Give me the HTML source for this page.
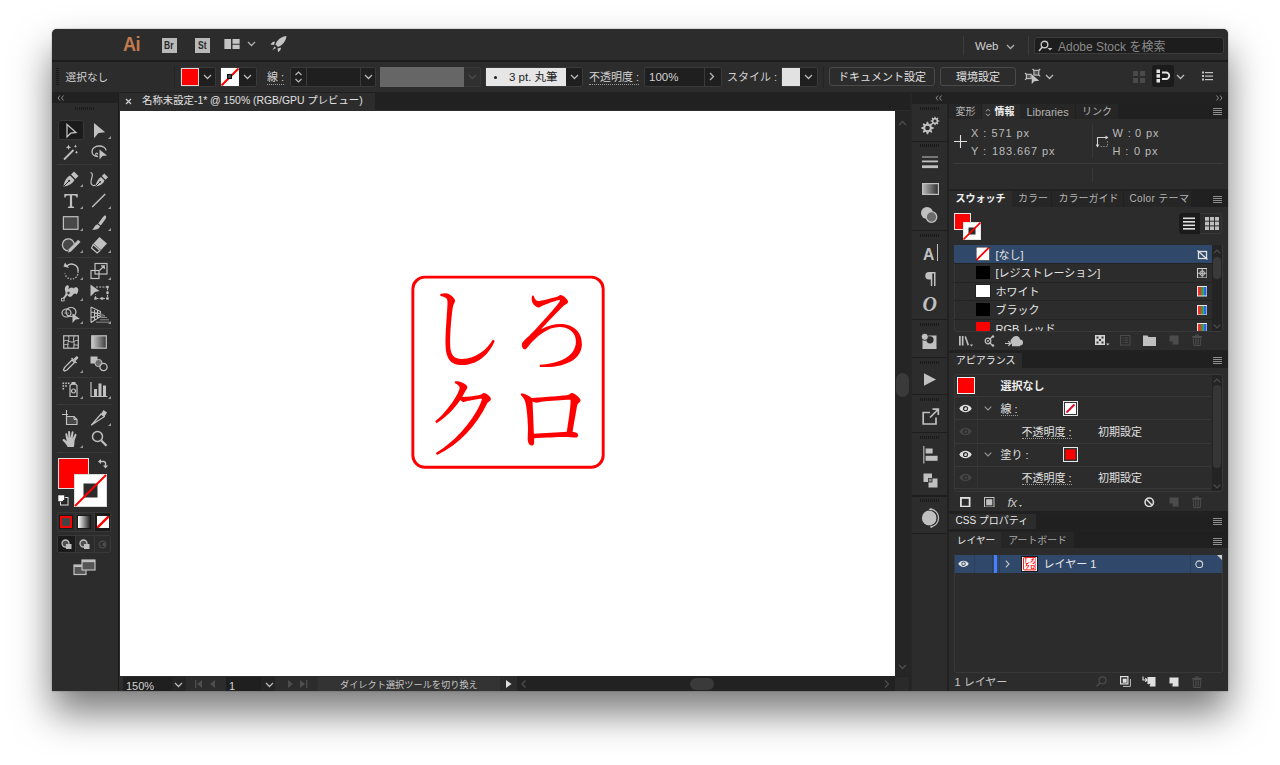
<!DOCTYPE html>
<html lang="ja">
<head>
<meta charset="utf-8">
<title>Illustrator</title>
<style>
html,body{margin:0;padding:0;background:#fff;}
body{width:1280px;height:765px;overflow:hidden;position:relative;font-family:"Liberation Sans","Noto Sans CJK JP",sans-serif;font-size:11px;color:#d2d2d2;}
#win{position:absolute;left:52px;top:29px;width:1176px;height:662px;border-radius:5px 5px 0 0;overflow:hidden;background:#2c2c2c;}
#shadow{position:absolute;left:52px;top:29px;width:1176px;height:662px;border-radius:5px 5px 0 0;box-shadow:0 22px 38px rgba(0,0,0,.52),0 0 2px rgba(0,0,0,.35);}
#pg{position:absolute;left:-52px;top:-29px;width:1280px;height:765px;}
#pg div,#pg span,#pg svg{position:absolute;box-sizing:border-box;}
#pg span{white-space:nowrap;line-height:1;}
.dk{background:#212121;}
.pn{background:#2c2c2c;}
.ln{background:#1c1c1c;}
.fld{background:#1f1f1f;border:1px solid #3a3a3a;border-radius:2px;}
.btn{border:1px solid #4a4a4a;border-radius:3px;}
.t{color:#d2d2d2;}
.b{font-weight:bold;color:#ececec;}
.dim{color:#8c8c8c;}
</style>
</head>
<body>
<div id="shadow"></div>
<div id="win"><div id="pg">

<!-- ===== APP BAR ===== -->
<div class="pn" style="left:52px;top:29px;width:1176px;height:32px;"></div>
<div class="ln" style="left:52px;top:60px;width:1176px;height:2px;"></div>

<span style="left:123px;top:33px;font-size:21px;font-weight:bold;color:#c27a4c;letter-spacing:-0.5px;transform:scaleX(.86);transform-origin:0 0;">Ai</span>
<div style="left:162px;top:37.5px;width:15px;height:15px;background:#b9b9b9;"></div>
<span style="left:164px;top:40.5px;font-size:10px;font-weight:bold;color:#2a2a2a;transform:scaleX(.85);transform-origin:0 0;">Br</span>
<div style="left:195px;top:37.5px;width:15px;height:15px;background:#b9b9b9;"></div>
<span style="left:198px;top:40.5px;font-size:10px;font-weight:bold;color:#2a2a2a;transform:scaleX(.85);transform-origin:0 0;">St</span>
<svg style="left:224px;top:38.7px;" width="16" height="10.5" viewBox="0 0 16 11"><rect x="0" y="0" width="7" height="11" fill="#c4c4c4"/><rect x="8.5" y="0" width="7.5" height="5" fill="#c4c4c4"/><rect x="8.5" y="6" width="7.5" height="5" fill="#c4c4c4"/></svg>
<svg style="left:247px;top:41px;" width="9" height="6" viewBox="0 0 9 6"><path d="M1 1l3.5 3.5L8 1" fill="none" stroke="#b0b0b0" stroke-width="1.3"/></svg>
<svg style="left:269px;top:35px;" width="19" height="18" viewBox="0 0 19 18"><path d="M17.5 1C12 1.5 8 5 6.5 9.5l2.5 2.5C13 10.5 17 6.500 17.5 1z" fill="#c4c4c4"/><path d="M6 6.500C4 6.500 2.500 7.500 1.500 9.500l3.500.5z" fill="#c4c4c4"/><path d="M12 12.500c0 2-1 3.500-3 4.500l-.5-3.500z" fill="#c4c4c4"/><path d="M5.500 11.500l-2 3.500 3.500-2z" fill="#c4c4c4"/></svg>
<div style="left:963px;top:36px;width:1px;height:19px;background:#3c3c3c;"></div>
<div style="left:1028px;top:36px;width:1px;height:19px;background:#3c3c3c;"></div>
<span class="t" style="left:975px;top:40.5px;font-size:11.5px;">Web</span>
<svg style="left:1006px;top:44px;" width="9" height="6" viewBox="0 0 9 6"><path d="M1 1l3.500 3.500L8 1" fill="none" stroke="#b0b0b0" stroke-width="1.300"/></svg>
<div style="left:1034px;top:37px;width:190px;height:17px;background:#1d1d1d;border:1px solid #3b3b3b;border-radius:3px;"></div>
<svg style="left:1038px;top:40px;" width="16" height="13" viewBox="0 0 16 13"><circle cx="6.500" cy="4.500" r="3.300" fill="none" stroke="#c4c4c4" stroke-width="1.400"/><path d="M4.300 7L1 11" stroke="#c4c4c4" stroke-width="1.600" fill="none"/><path d="M9.500 8h5l-2.500 2.500z" fill="#c4c4c4"/></svg>
<span style="left:1058px;top:40.5px;font-size:12px;color:#8a8a8a;">Adobe Stock を検索</span>
<!--APPBAR-->

<!-- ===== CONTROL BAR ===== -->
<div class="pn" style="left:52px;top:62px;width:1176px;height:30px;"></div>
<div class="dk" style="left:52px;top:92px;width:1176px;height:18px;"></div>

<div style="left:56px;top:68px;width:3px;height:18px;background:repeating-linear-gradient(#1a1a1a 0 1px,#2c2c2c 1px 2px);"></div>
<span class="t" style="left:65.5px;top:72px;font-size:10.7px;">選択なし</span>
<div style="left:174px;top:66px;width:1px;height:22px;background:#242424;"></div>
<div class="fld" style="left:180px;top:67px;width:36px;height:20px;"></div>
<div style="left:181px;top:68px;width:18px;height:18px;background:#ff0000;border:1px solid #d8d8d8;"></div>
<svg style="left:203px;top:73.5px;" width="9" height="6" viewBox="0 0 9 6"><path d="M1 1l3.5 3.5L8 1" fill="none" stroke="#b8b8b8" stroke-width="1.3"/></svg>
<div class="fld" style="left:220px;top:67px;width:37px;height:20px;"></div>
<div style="left:221px;top:68px;width:18px;height:18px;background:#fff;"></div>
<svg style="left:221px;top:68px;" width="18" height="18" viewBox="0 0 18 18"><path d="M0.500 17.500L17.500 0.500" stroke="#ff0000" stroke-width="2"/><rect x="6.500" y="6.500" width="4" height="4" fill="#444" stroke="#111" stroke-width="1"/></svg>
<svg style="left:243px;top:73.5px;" width="9" height="6" viewBox="0 0 9 6"><path d="M1 1l3.5 3.5L8 1" fill="none" stroke="#b8b8b8" stroke-width="1.3"/></svg>
<span class="t" style="left:267px;top:72px;font-size:11px;border-bottom:1px dotted #999;padding-bottom:.5px;">線 :</span>
<div class="fld" style="left:290px;top:67px;width:86px;height:20px;"></div>
<div style="left:306px;top:68px;width:1px;height:18px;background:#3a3a3a;"></div>
<div style="left:360px;top:68px;width:1px;height:18px;background:#3a3a3a;"></div>
<svg style="left:294px;top:70px;" width="9" height="14" viewBox="0 0 9 14"><path d="M1.500 5L4.500 2l3 3M1.500 9l3 3 3-3" fill="none" stroke="#b8b8b8" stroke-width="1.200"/></svg>
<svg style="left:364px;top:73.5px;" width="9" height="6" viewBox="0 0 9 6"><path d="M1 1l3.5 3.5L8 1" fill="none" stroke="#b8b8b8" stroke-width="1.3"/></svg>
<div style="left:380px;top:67px;width:84px;height:20px;background:#666;"></div>
<div style="left:464px;top:67px;width:17px;height:20px;background:#303030;border:1px solid #383838;border-left:0;border-radius:0 2px 2px 0;"></div>
<svg style="left:468px;top:73.5px;" width="9" height="6" viewBox="0 0 9 6"><path d="M1 1l3.5 3.5L8 1" fill="none" stroke="#4a4a4a" stroke-width="1.3"/></svg>
<div class="fld" style="left:485px;top:67px;width:98px;height:20px;"></div>
<div style="left:486px;top:68px;width:80px;height:18px;background:#e6e6e6;"></div>
<div style="left:494px;top:76px;width:3px;height:3px;border-radius:2px;background:#222;"></div>
<span style="left:509px;top:72px;font-size:11.500px;color:#222;">3 pt. 丸筆</span>
<svg style="left:570px;top:73.5px;" width="9" height="6" viewBox="0 0 9 6"><path d="M1 1l3.5 3.5L8 1" fill="none" stroke="#b8b8b8" stroke-width="1.3"/></svg>
<span class="t" style="left:589px;top:72px;font-size:11px;border-bottom:1px dotted #999;padding-bottom:.5px;">不透明度 :</span>
<div class="fld" style="left:644px;top:67px;width:78px;height:20px;"></div>
<div style="left:704px;top:68px;width:1px;height:18px;background:#3a3a3a;"></div>
<span class="t" style="left:649px;top:72px;font-size:11.500px;">100%</span>
<svg style="left:709px;top:72px;" width="6" height="9" viewBox="0 0 6 9"><path d="M1 1l3.500 3.500L1 8" fill="none" stroke="#b8b8b8" stroke-width="1.300"/></svg>
<span class="t" style="left:727px;top:72px;font-size:11px;">スタイル :</span>
<div class="fld" style="left:781px;top:67px;width:37px;height:20px;"></div>
<div style="left:782px;top:68px;width:18px;height:18px;background:#e2e2e2;"></div>
<svg style="left:804px;top:73.5px;" width="9" height="6" viewBox="0 0 9 6"><path d="M1 1l3.5 3.5L8 1" fill="none" stroke="#b8b8b8" stroke-width="1.3"/></svg>
<div style="left:823px;top:66px;width:1px;height:22px;background:#242424;"></div>
<div class="btn" style="left:829px;top:67px;width:106px;height:19px;"></div>
<span class="t" style="left:838px;top:72px;font-size:11px;color:#e0e0e0;">ドキュメント設定</span>
<div class="btn" style="left:940px;top:67px;width:76px;height:19px;"></div>
<span class="t" style="left:956px;top:72px;font-size:11px;color:#e0e0e0;">環境設定</span>
<svg style="left:1024px;top:68px;" width="18" height="17" viewBox="0 0 18 17"><g fill="none" stroke="#c4c4c4" stroke-width="1.100"><rect x="2.400" y="6.300" width="4.800" height="4.300" fill="#555"/><path d="M2.400 6.300L1 5M2.400 10.600L1 11.900"/><rect x="9.900" y="2.300" width="4.900" height="4.800" fill="#555"/><path d="M9.900 2.300L8.500 1M14.800 2.300L16.200 1M14.800 7.100L16.200 8.400"/></g><path d="M7.700 6.300V16.300L10.300 13.300L15.200 12.700Z" fill="#c4c4c4"/></svg>
<svg style="left:1045px;top:73.5px;" width="9" height="6" viewBox="0 0 9 6"><path d="M1 1l3.5 3.5L8 1" fill="none" stroke="#b8b8b8" stroke-width="1.3"/></svg>
<svg style="left:1132px;top:70px;" width="14" height="14" viewBox="0 0 14 14"><g fill="#4a4a4a"><rect x="1" y="1" width="5" height="5"/><rect x="8" y="1" width="5" height="5"/><rect x="1" y="8" width="5" height="5"/><rect x="8" y="8" width="5" height="5"/></g></svg>
<div style="left:1152px;top:65px;width:22px;height:22px;background:#1b1b1b;border-radius:3px;"></div>
<svg style="left:1155px;top:68px;" width="16" height="16" viewBox="0 0 16 16"><g fill="#e4e4e4"><rect x="1.500" y="1.500" width="3.500" height="3.500"/><rect x="1.500" y="6.200" width="3.500" height="3.500"/><rect x="1.500" y="11" width="3.500" height="3.500"/></g><path d="M7 4.500h4a3.200 3.200 0 0 1 0 6.500H7" fill="none" stroke="#e4e4e4" stroke-width="1.800"/></svg>
<svg style="left:1176px;top:73.5px;" width="9" height="6" viewBox="0 0 9 6"><path d="M1 1l3.5 3.5L8 1" fill="none" stroke="#b8b8b8" stroke-width="1.3"/></svg>
<svg style="left:1202px;top:71px;" width="11" height="10" viewBox="0 0 11 10"><g fill="#c4c4c4"><rect x="0" y="0.500" width="2" height="2"/><rect x="3" y="1" width="8" height="1.200"/><rect x="0" y="4" width="2" height="2"/><rect x="3" y="4.500" width="8" height="1.200"/><rect x="0" y="7.500" width="2" height="2"/><rect x="3" y="8" width="8" height="1.200"/></g></svg>
<!--CTRL-->

<!-- ===== TOOLS ===== -->
<div class="pn" style="left:52px;top:102px;width:67px;height:589px;"></div>
<!--TOOLS_BEGIN-->
<div class="dk" style="left:52px;top:92px;width:67px;height:11px;"></div>
<svg style="left:57px;top:95px;" width="8" height="6" viewBox="0 0 8 6"><path d="M3 0.500L1 3l2 2.500M6.500 0.500L4.500 3l2 2.500" fill="none" stroke="#8a8a8a" stroke-width="1"/></svg>
<div style="left:75px;top:107px;width:19px;height:3px;background:repeating-linear-gradient(90deg,#1a1a1a 0 1px,#2c2c2c 1px 2px);"></div>
<div style="left:118px;top:93px;width:1px;height:598px;background:#1c1c1c;"></div>
<div style="left:58px;top:120px;width:26px;height:20px;background:#1b1b1b;border:1px solid #383838;border-radius:3px;"></div>
<div style="left:57px;top:164px;width:55px;height:1px;background:#383838;"></div>
<div style="left:57px;top:257px;width:55px;height:1px;background:#383838;"></div>
<div style="left:57px;top:328px;width:55px;height:1px;background:#383838;"></div>
<div style="left:57px;top:377px;width:55px;height:1px;background:#383838;"></div>
<div style="left:57px;top:404px;width:55px;height:1px;background:#383838;"></div>
<div style="left:57px;top:452px;width:55px;height:1px;background:#383838;"></div>
<svg style="left:58.8px;top:118.5px;overflow:visible;" width="24" height="24" viewBox="-12 -12 24 24"><path d="M-4 -6.600L5 1.500L-0.300 2.200L-4 6Z" fill="none" stroke="#c0c0c0" stroke-width="1.300" stroke-linejoin="miter"/></svg>
<svg style="left:86.8px;top:118.5px;overflow:visible;" width="24" height="24" viewBox="-12 -12 24 24"><path d="M-5 -8L6.200 1.200L-0.500 2L-5 7.200Z" fill="#c0c0c0"/></svg>
<svg style="left:108.3px;top:135.8px;" width="3" height="3" viewBox="0 0 3 3"><path d="M3 0V3H0Z" fill="#9a9a9a"/></svg>
<svg style="left:58.8px;top:140.7px;overflow:visible;" width="24" height="24" viewBox="-12 -12 24 24"><path d="M-7 6.500L2.500 -3" stroke="#c0c0c0" stroke-width="1.800" fill="none"/><path d="M-2.500 -8.500l.8 2 2 .8-2 .8-.8 2-.8-2-2-.8 2-.8zM4.500 -8.500l.5 1.300 1.300.5-1.300.5-.5 1.300-.5-1.300-1.300-.5 1.300-.5zM5.500 -2.500l.5 1.200 1.200.5-1.200.5-.5 1.200-.5-1.200-1.200-.5 1.200-.5z" fill="#c0c0c0"/></svg>
<svg style="left:86.8px;top:140.7px;overflow:visible;" width="24" height="24" viewBox="-12 -12 24 24"><path d="M-1 3.500C-5 3.500 -7 1 -7 -1.500C-7 -5 -3.500 -7 0 -7C4 -7 7 -5 7 -2.500" fill="none" stroke="#c0c0c0" stroke-width="1.300"/><path d="M-1.500 3.500c-1.500 -.5 -2.500 -2 -1.500 -3c1 -.8 2 0 1.500 1" fill="none" stroke="#c0c0c0" stroke-width="1.100"/><path d="M0.500 -3.500L8 2.500L3.500 3L0.500 6.500Z" fill="#c0c0c0"/></svg>
<svg style="left:58.8px;top:166.8px;overflow:visible;" width="24" height="24" viewBox="-12 -12 24 24"><path d="M-7.500 7.500C-7 2 -4 -2 -1 -3.500L3.500 1C2 4 -2 7 -7.500 7.500Z" fill="#c0c0c0"/><path d="M0 -4.500L3 -7.500L7.500 -3L4.500 0Z" fill="#c0c0c0"/><path d="M-7 7L-2 2" stroke="#2c2c2c" stroke-width="1"/><circle cx="-1.800" cy="1.800" r="1" fill="#2c2c2c"/></svg>
<svg style="left:80.3px;top:184.1px;" width="3" height="3" viewBox="0 0 3 3"><path d="M3 0V3H0Z" fill="#9a9a9a"/></svg>
<svg style="left:86.8px;top:166.8px;overflow:visible;" width="24" height="24" viewBox="-12 -12 24 24"><path d="M-3.500 7.500C-3 3 -0.500 -0.500 2 -2L5.500 1.500C4.500 4.500 1 7 -3.500 7.500Z" fill="#c0c0c0"/><path d="M2.800 -3L5.300 -5.500L9 -1.800L6.500 0.700Z" fill="#c0c0c0"/><path d="M-3 7L1 3" stroke="#2c2c2c" stroke-width="1"/><circle cx="1.200" cy="2.800" r=".9" fill="#2c2c2c"/><path d="M-8.500 -6.500C-5 -6 -7.500 -1 -8 2.500C-8.500 6 -5.500 7.500 -3.500 6" fill="none" stroke="#c0c0c0" stroke-width="1.200"/></svg>
<svg style="left:58.8px;top:188.8px;overflow:visible;" width="24" height="24" viewBox="-12 -12 24 24"><path d="M-6.700 -7h13.400v3.600h-1.300c-.2-1.500-.7-2-2.200-2H1.100v9.800c0 1 .5 1.300 2 1.400v1.300h-6.200v-1.300c1.500-.1 2-.4 2-1.400V-5.400h-2.100c-1.500 0-2 .5-2.200 2h-1.300z" fill="#c0c0c0"/></svg>
<svg style="left:80.3px;top:206.1px;" width="3" height="3" viewBox="0 0 3 3"><path d="M3 0V3H0Z" fill="#9a9a9a"/></svg>
<svg style="left:86.8px;top:188.8px;overflow:visible;" width="24" height="24" viewBox="-12 -12 24 24"><path d="M-6.800 6L6.200 -7" stroke="#c0c0c0" stroke-width="1.400" fill="none"/></svg>
<svg style="left:108.3px;top:206.1px;" width="3" height="3" viewBox="0 0 3 3"><path d="M3 0V3H0Z" fill="#9a9a9a"/></svg>
<svg style="left:58.8px;top:210.5px;overflow:visible;" width="24" height="24" viewBox="-12 -12 24 24"><rect x="-7.600" y="-6.300" width="14.600" height="12.600" fill="#484848" stroke="#c0c0c0" stroke-width="1.200"/></svg>
<svg style="left:80.3px;top:227.8px;" width="3" height="3" viewBox="0 0 3 3"><path d="M3 0V3H0Z" fill="#9a9a9a"/></svg>
<svg style="left:86.8px;top:210.5px;overflow:visible;" width="24" height="24" viewBox="-12 -12 24 24"><path d="M6.300 -7.500C7.500 -7 7.300 -5.500 6.500 -4L1.800 2.500L-0.800 0.500L4 -6C5 -7.300 5.600 -7.800 6.300 -7.500Z" fill="#c0c0c0"/><path d="M-1.500 1.300L1 3.300C0.500 5.500 -1.500 7 -7 6.800C-5 5.500 -4.500 2 -1.500 1.300Z" fill="#c0c0c0"/></svg>
<svg style="left:108.3px;top:227.8px;" width="3" height="3" viewBox="0 0 3 3"><path d="M3 0V3H0Z" fill="#9a9a9a"/></svg>
<svg style="left:58.8px;top:232.7px;overflow:visible;" width="24" height="24" viewBox="-12 -12 24 24"><path d="M-3 5.800A6 6 0 1 1 3.300 -1" fill="#484848" stroke="#c0c0c0" stroke-width="1.300"/><path d="M-2.800 7.800L-2.300 4.200L7.200 -5.300L9.500 -3L0 6.500Z" fill="#c0c0c0"/></svg>
<svg style="left:80.3px;top:250.0px;" width="3" height="3" viewBox="0 0 3 3"><path d="M3 0V3H0Z" fill="#9a9a9a"/></svg>
<svg style="left:86.8px;top:232.7px;overflow:visible;" width="24" height="24" viewBox="-12 -12 24 24"><path d="M0.500 -8L8 -1.500L2 5L-5.500 -1.500Z" fill="#c0c0c0"/><path d="M-5.800 -0.500L1 5.500L-1.800 8L-7.500 3Z" fill="none" stroke="#c0c0c0" stroke-width="1.200"/></svg>
<svg style="left:108.3px;top:250.0px;" width="3" height="3" viewBox="0 0 3 3"><path d="M3 0V3H0Z" fill="#9a9a9a"/></svg>
<svg style="left:58.8px;top:259.4px;overflow:visible;" width="24" height="24" viewBox="-12 -12 24 24"><path d="M-4.500 -4.500A6.500 6.500 0 0 1 7 0.500" fill="none" stroke="#c0c0c0" stroke-width="1.500"/><path d="M-7.500 -4.500L-2 -3L-6 -8.500Z" fill="#c0c0c0"/><path d="M7 0.500A6.500 6.500 0 0 1 -6 2.500" fill="none" stroke="#c0c0c0" stroke-width="1.300" stroke-dasharray="1.300 1.500"/></svg>
<svg style="left:80.3px;top:276.7px;" width="3" height="3" viewBox="0 0 3 3"><path d="M3 0V3H0Z" fill="#9a9a9a"/></svg>
<svg style="left:86.8px;top:259.4px;overflow:visible;" width="24" height="24" viewBox="-12 -12 24 24"><rect x="-8" y="-0.500" width="8" height="8" fill="none" stroke="#c0c0c0" stroke-width="1.200"/><rect x="-4" y="-7.500" width="12" height="10.500" fill="none" stroke="#c0c0c0" stroke-width="1.200"/><path d="M0.500 -0.500L5 -5M2 -5.200h3.300v3.300" fill="none" stroke="#c0c0c0" stroke-width="1.200"/></svg>
<svg style="left:108.3px;top:276.7px;" width="3" height="3" viewBox="0 0 3 3"><path d="M3 0V3H0Z" fill="#9a9a9a"/></svg>
<svg style="left:58.8px;top:281.0px;overflow:visible;" width="24" height="24" viewBox="-12 -12 24 24"><path d="M-4.500 -7.500C-2 -8.500 -1.500 -5.500 -3 -3.500C-1 -5.500 1.500 -6.500 2.500 -4.500C3.500 -6 6 -6.500 7 -4.500C8 -2.500 6.500 0 5.500 1.500C4.500 -0.500 2.500 0.500 1.500 2.500C0 4.500 -3 4 -3.500 2C-4.500 3.500 -6 5 -7 6L-8.200 4.800C-6.500 3 -5 1 -5.500 -1C-6.500 -3 -6.500 -6 -4.500 -7.500Z" fill="#c0c0c0"/><circle cx="-2.500" cy="0" r="1.700" fill="#2c2c2c" stroke="#c0c0c0" stroke-width=".9"/><rect x="-9.500" y="5.300" width="2.600" height="2.600" fill="#2c2c2c" stroke="#c0c0c0" stroke-width=".9"/></svg>
<svg style="left:80.3px;top:298.3px;" width="3" height="3" viewBox="0 0 3 3"><path d="M3 0V3H0Z" fill="#9a9a9a"/></svg>
<svg style="left:86.8px;top:281.0px;overflow:visible;" width="24" height="24" viewBox="-12 -12 24 24"><path d="M-8.500 -8.500L0.500 -2L-4 -1L-8.500 3.500Z" fill="#c0c0c0"/><path d="M-3 -6H8.500V5.500H-3.500V1.500" fill="none" stroke="#c0c0c0" stroke-width="1.100" stroke-dasharray="2 1.200"/><g fill="#c0c0c0"><rect x="7.300" y="-7.200" width="2.400" height="2.400"/><rect x="7.300" y="4.300" width="2.400" height="2.400"/><rect x="-4.700" y="4.300" width="2.400" height="2.400"/><rect x="1.800" y="4.300" width="2.400" height="2.400"/><rect x="7.300" y="-1.500" width="2.400" height="2.400"/></g></svg>
<svg style="left:58.8px;top:303.3px;overflow:visible;" width="24" height="24" viewBox="-12 -12 24 24"><ellipse cx="-4.500" cy="-2" rx="4.500" ry="4" fill="none" stroke="#c0c0c0" stroke-width="1.200"/><ellipse cx="0" cy="-3" rx="5" ry="4.500" fill="none" stroke="#c0c0c0" stroke-width="1.200"/><path d="M-6.500 -2h4.500" stroke="#c0c0c0" stroke-width="1.200" stroke-dasharray="1 1"/><path d="M1.500 -1.500L9 4L4.500 4.500L1.500 8Z" fill="#c0c0c0"/></svg>
<svg style="left:80.3px;top:320.6px;" width="3" height="3" viewBox="0 0 3 3"><path d="M3 0V3H0Z" fill="#9a9a9a"/></svg>
<svg style="left:86.8px;top:303.3px;overflow:visible;" width="24" height="24" viewBox="-12 -12 24 24"><path d="M-8 -8V7.500M-8 -8L1.500 -3.500V1.500L-8 7.500M-8 -3L1.500 -1.500M-8 2.500L1.500 0M-4.500 -6.300V5.300M-1.500 -5V3.500" fill="none" stroke="#c0c0c0" stroke-width="1.100"/><path d="M1.500 -1.500L6 1H1.500ZM1.500 2.500H8M1 4.800H10M-3 7.200H11" fill="none" stroke="#8a8a8a" stroke-width="1"/></svg>
<svg style="left:108.3px;top:320.6px;" width="3" height="3" viewBox="0 0 3 3"><path d="M3 0V3H0Z" fill="#9a9a9a"/></svg>
<svg style="left:58.8px;top:330.0px;overflow:visible;" width="24" height="24" viewBox="-12 -12 24 24"><rect x="-7.300" y="-6.200" width="14.600" height="12.400" fill="none" stroke="#c0c0c0" stroke-width="1.200"/><path d="M-7 -1C-3 -3 -1 1 2 0C4 -1 5 -2 7 -1.500M-2.500 -6C-1 -3 -4 0 -3 6M3 -6C1.500 -2 4.500 2 2.500 6M-7 3C-5 2 -4 3 -2.500 2.500M2.500 3C4 2.500 5.500 3.500 7 3" fill="none" stroke="#c0c0c0" stroke-width="1"/></svg>
<svg style="left:86.8px;top:330.0px;overflow:visible;" width="24" height="24" viewBox="-12 -12 24 24"><defs><linearGradient id="tg1" x1="0" x2="1" y1="0" y2="0"><stop offset="0" stop-color="#d0d0d0"/><stop offset="1" stop-color="#3a3a3a"/></linearGradient></defs><rect x="-7.300" y="-6.200" width="14.600" height="12.400" fill="url(#tg1)" stroke="#c0c0c0" stroke-width="1.200"/></svg>
<svg style="left:58.8px;top:352.2px;overflow:visible;" width="24" height="24" viewBox="-12 -12 24 24"><path d="M-7.500 6L-6.500 3.500L1 -4L3.500 -1.500L-4 6L-6.500 7Z" fill="none" stroke="#c0c0c0" stroke-width="1.300"/><path d="M0 -5.500L5 -0.500L6 -1.500L1 -6.500Z" fill="#c0c0c0"/><path d="M2.500 -5L5 -7.500C6 -8.500 8 -7 7 -5.500L4.500 -3Z" fill="#c0c0c0"/></svg>
<svg style="left:80.3px;top:369.5px;" width="3" height="3" viewBox="0 0 3 3"><path d="M3 0V3H0Z" fill="#9a9a9a"/></svg>
<svg style="left:86.8px;top:352.2px;overflow:visible;" width="24" height="24" viewBox="-12 -12 24 24"><rect x="-8.500" y="-7.500" width="7" height="7" fill="#c0c0c0"/><circle cx="-0.500" cy="-1" r="3.600" fill="#6a6a6a" stroke="#c0c0c0" stroke-width="1"/><circle cx="4.500" cy="3" r="3.600" fill="#2c2c2c" stroke="#c0c0c0" stroke-width="1.300"/></svg>
<svg style="left:58.8px;top:378.3px;overflow:visible;" width="24" height="24" viewBox="-12 -12 24 24"><g fill="#c0c0c0"><rect x="-8.500" y="-7.500" width="1.600" height="1.600"/><rect x="-5.800" y="-7.500" width="1.600" height="1.600"/><rect x="-3.100" y="-7.500" width="1.600" height="1.600"/><rect x="-8.500" y="-4.800" width="1.600" height="1.600"/><rect x="-5.800" y="-4.800" width="1.600" height="1.600"/><rect x="-8.500" y="-2.100" width="1.600" height="1.600"/><rect x="0.500" y="-8" width="4" height="2.500"/></g><path d="M-1 -4.500L0.500 -5.800H4.500L6 -4.500V6.500H-1Z" fill="none" stroke="#c0c0c0" stroke-width="1.200"/><circle cx="2.500" cy="1" r="2" fill="none" stroke="#c0c0c0" stroke-width="1.200"/></svg>
<svg style="left:80.3px;top:395.6px;" width="3" height="3" viewBox="0 0 3 3"><path d="M3 0V3H0Z" fill="#9a9a9a"/></svg>
<svg style="left:86.8px;top:378.3px;overflow:visible;" width="24" height="24" viewBox="-12 -12 24 24"><path d="M-8 -8V6.500H8.500" fill="none" stroke="#c0c0c0" stroke-width="1.200"/><rect x="-5" y="-1" width="3" height="7" fill="#c0c0c0"/><rect x="-0.500" y="-6.500" width="3" height="12.500" fill="#c0c0c0"/><rect x="4" y="-4.500" width="3" height="10.500" fill="#c0c0c0"/></svg>
<svg style="left:108.3px;top:395.6px;" width="3" height="3" viewBox="0 0 3 3"><path d="M3 0V3H0Z" fill="#9a9a9a"/></svg>
<svg style="left:58.8px;top:405.8px;overflow:visible;" width="24" height="24" viewBox="-12 -12 24 24"><path d="M-9 -3.500H-3M-4.500 -8V-2" stroke="#c0c0c0" stroke-width="1.100" fill="none"/><path d="M-4.500 -1.500H3L6 1.500V6.500H-4.500Z" fill="#484848" stroke="#c0c0c0" stroke-width="1.200"/><path d="M3 -1.500V1.500H6" fill="none" stroke="#c0c0c0" stroke-width="1"/></svg>
<svg style="left:86.8px;top:405.8px;overflow:visible;" width="24" height="24" viewBox="-12 -12 24 24"><path d="M-7.500 7L2 -4L5.500 -1.500Z" fill="none" stroke="#c0c0c0" stroke-width="1.200" stroke-linejoin="round"/><path d="M2 -4L4.500 -8L8 -5.500L5.500 -1.500Z" fill="#c0c0c0"/></svg>
<svg style="left:108.3px;top:423.1px;" width="3" height="3" viewBox="0 0 3 3"><path d="M3 0V3H0Z" fill="#9a9a9a"/></svg>
<svg style="left:58.8px;top:427.2px;overflow:visible;" width="24" height="24" viewBox="-12 -12 24 24"><path d="M-3.300 8C-4.500 5.500 -6 3.800 -8.200 1.800C-9 0.800 -7.700 -0.500 -6.500 0.300L-4.300 2.300L-5.600 -4.300C-5.900 -5.800 -4 -6.200 -3.700 -4.800L-2.700 -0.500L-2.900 -7C-2.900 -8.500 -1 -8.500 -0.900 -7L-0.600 -0.800L0.600 -6.800C0.900 -8.200 2.700 -7.900 2.500 -6.400L1.600 -0.300L3.600 -4.600C4.200 -5.900 5.900 -5.200 5.400 -3.800L3.600 1.500C3.300 4 3.500 6 2.800 8Z" fill="#c0c0c0"/></svg>
<svg style="left:80.3px;top:444.5px;" width="3" height="3" viewBox="0 0 3 3"><path d="M3 0V3H0Z" fill="#9a9a9a"/></svg>
<svg style="left:86.8px;top:427.2px;overflow:visible;" width="24" height="24" viewBox="-12 -12 24 24"><circle cx="-1.500" cy="-2.500" r="5" fill="none" stroke="#c0c0c0" stroke-width="1.500"/><path d="M2.300 1.500L7.500 6.800" stroke="#c0c0c0" stroke-width="2.200" fill="none"/></svg>
<div style="left:58px;top:458px;width:31px;height:31px;background:#ff0000;border:1px solid #e0e0e0;"></div>
<svg style="left:74px;top:474px;" width="33" height="33" viewBox="0 0 33 33"><rect x="0" y="0" width="33" height="33" fill="#dcdcdc"/><rect x="1" y="1" width="31" height="31" fill="#fff"/><rect x="9.500" y="9.500" width="14" height="14" fill="#2c2c2c"/><path d="M1 32L32 1" stroke="#ff0000" stroke-width="2"/></svg>
<svg style="left:97px;top:458px;" width="12" height="12" viewBox="0 0 12 12"><path d="M3.500 3.500H6.500A2 2 0 0 1 8.500 5.500V8" fill="none" stroke="#c0c0c0" stroke-width="1.400"/><path d="M4 1v5L1 3.500zM6 7.500h5L8.500 10.500z" fill="#c0c0c0"/></svg>
<svg style="left:57px;top:494px;" width="12" height="12" viewBox="0 0 12 12"><rect x="3.500" y="3.500" width="7.500" height="7.500" fill="#222" stroke="#ddd" stroke-width="1"/><rect x="1" y="1" width="6.500" height="6.500" fill="#fff" stroke="#222" stroke-width=".6"/><rect x="6" y="6" width="2.500" height="2.500" fill="#2c2c2c"/></svg>
<div style="left:57px;top:512px;width:54px;height:20px;border:1px solid #393939;border-radius:2px;"></div>
<div style="left:75px;top:513px;width:1px;height:18px;background:#393939;"></div>
<div style="left:94px;top:513px;width:1px;height:18px;background:#393939;"></div>
<div style="left:95px;top:513px;width:15px;height:18px;background:#1b1b1b;"></div>
<div style="left:60px;top:516px;width:12px;height:12px;background:#444;border:2px solid #ff0000;outline:1px solid #1a1a1a;"></div>
<div style="left:78px;top:516px;width:12px;height:12px;background:linear-gradient(90deg,#fff,#222);outline:1px solid #1a1a1a;"></div>
<svg style="left:97px;top:516px;" width="12" height="12" viewBox="0 0 12 12"><rect width="12" height="12" fill="#fff"/><path d="M0 12L12 0" stroke="#ff0000" stroke-width="2.400"/></svg>
<div style="left:57px;top:535px;width:54px;height:18px;border:1px solid #393939;border-radius:2px;"></div>
<div style="left:58px;top:536px;width:17px;height:16px;background:#1b1b1b;"></div>
<div style="left:75px;top:536px;width:1px;height:16px;background:#393939;"></div>
<div style="left:94px;top:536px;width:1px;height:16px;background:#393939;"></div>
<svg style="left:61px;top:539px;" width="12" height="11" viewBox="0 0 12 11"><circle cx="4.500" cy="4.500" r="3.500" fill="#505050" stroke="#c0c0c0" stroke-width="1.300"/><rect x="5" y="5" width="5.500" height="5" fill="#c0c0c0"/></svg>
<svg style="left:79px;top:539px;" width="12" height="11" viewBox="0 0 12 11"><circle cx="4.500" cy="4.500" r="3.500" fill="#505050" stroke="#c0c0c0" stroke-width="1.300"/><rect x="5" y="5" width="5.500" height="5" fill="#c0c0c0"/></svg>
<svg style="left:98px;top:540px;" width="9" height="9" viewBox="0 0 9 9"><circle cx="4.500" cy="4.500" r="3.300" fill="none" stroke="#4c4c4c" stroke-width="1.200"/><rect x="4.500" y="3" width="3" height="3" fill="#4c4c4c"/></svg>
<svg style="left:73px;top:559px;" width="24" height="17" viewBox="0 0 24 17"><rect x="1" y="6" width="12" height="9.500" fill="#555" stroke="#c0c0c0" stroke-width="1.200"/><rect x="1" y="6" width="12" height="2" fill="#c0c0c0"/><rect x="9" y="1" width="13" height="10" fill="#555" stroke="#c0c0c0" stroke-width="1.200"/><rect x="9" y="1" width="13" height="2.200" fill="#c0c0c0"/></svg>
<!--TOOLS_END-->
<!--TOOLS-->

<!-- ===== DOCUMENT ===== -->
<div style="left:119px;top:93px;width:256px;height:17px;background:#2c2c2c;"></div>
<div style="left:120px;top:111px;width:775px;height:565px;background:#fff;"></div>

<svg style="left:125px;top:98px;" width="7" height="7" viewBox="0 0 7 7"><path d="M1 1l5 5M6 1l-5 5" stroke="#d0d0d0" stroke-width="1.200" fill="none"/></svg>
<span style="left:142px;top:96.3px;font-size:10.4px;color:#e2e2e2;">名称未設定-1* @ 150% (RGB/GPU プレビュー)</span>
<!-- stamp -->
<svg style="left:400px;top:265px;" width="220" height="215" viewBox="400 265 220 215"><rect x="412.850" y="277.100" width="190.350" height="190.200" rx="12" ry="12" fill="none" stroke="#ff0000" stroke-width="2.900"/>
<g font-family="'Liberation Serif','Noto Serif CJK SC',serif" font-size="82" fill="#ff0000">
<text transform="translate(422.730 361.220) scale(0.993 1.095)">し</text>
<text transform="translate(509.840 363.090) scale(1.038 1.102)">ろ</text>
<text transform="translate(423.430 450.100) scale(0.981 1.076)">ク</text>
<text transform="translate(505.680 450.230) scale(1.112 1.107)">ロ</text>
</g></svg>
<!-- vertical scrollbar -->
<div style="left:895px;top:111px;width:15px;height:565px;background:#252525;"></div>
<svg style="left:898px;top:120px;" width="9" height="6" viewBox="0 0 9 6"><path d="M1 5l3.500-3.500L8 5" fill="none" stroke="#4e4e4e" stroke-width="1.300"/></svg>
<svg style="left:898px;top:664px;" width="9" height="6" viewBox="0 0 9 6"><path d="M1 1l3.500 3.500L8 1" fill="none" stroke="#4e4e4e" stroke-width="1.300"/></svg>
<div style="left:896px;top:373px;width:13px;height:24px;border-radius:6.500px;background:#3a3a3a;"></div>
<!-- status bar -->
<div style="left:119px;top:676px;width:791px;height:15px;background:#222;"></div>
<div style="left:119px;top:676px;width:398px;height:15px;background:#2c2c2c;"></div>
<div style="left:123px;top:677px;width:49px;height:14px;background:#1f1f1f;"></div>
<div style="left:172px;top:677px;width:14px;height:14px;background:#242424;"></div>
<span class="t" style="left:126px;top:680.5px;font-size:11px;">150%</span>
<svg style="left:174px;top:682px;" width="9" height="6" viewBox="0 0 9 6"><path d="M1 1l3.5 3.5L8 1" fill="none" stroke="#b8b8b8" stroke-width="1.3"/></svg>
<svg style="left:195px;top:680px;" width="22" height="8" viewBox="0 0 22 8"><g fill="#4e4e4e"><rect x="0" y="0" width="1.300" height="8"/><path d="M7 0v8L2 4zM20 0v8l-5-4z"/></g></svg>
<div style="left:226px;top:677px;width:35px;height:14px;background:#1f1f1f;"></div>
<div style="left:261px;top:677px;width:14px;height:14px;background:#242424;"></div>
<span class="t" style="left:229px;top:680.5px;font-size:11px;">1</span>
<svg style="left:265px;top:682px;" width="9" height="6" viewBox="0 0 9 6"><path d="M1 1l3.5 3.5L8 1" fill="none" stroke="#b8b8b8" stroke-width="1.3"/></svg>
<svg style="left:287px;top:680px;" width="22" height="8" viewBox="0 0 22 8"><g fill="#4e4e4e"><path d="M1 0v8l5-4zM13 0v8l5-4z"/><rect x="19" y="0" width="1.300" height="8"/></g></svg>
<div style="left:318px;top:677px;width:182px;height:14px;background:#333;"></div>
<span class="t" style="left:340px;top:681px;font-size:9.2px;color:#c8c8c8;">ダイレクト選択ツールを切り換え</span>
<svg style="left:505px;top:680px;" width="7" height="8" viewBox="0 0 7 8"><path d="M1 0v8l5.500-4z" fill="#e0e0e0"/></svg>
<svg style="left:521px;top:680px;" width="6" height="8" viewBox="0 0 6 8"><path d="M4.500 0.500L1 4l3.500 3.500" fill="none" stroke="#4e4e4e" stroke-width="1.200"/></svg>
<svg style="left:884px;top:680px;" width="6" height="8" viewBox="0 0 6 8"><path d="M1 0.500L4.500 4 1 7.500" fill="none" stroke="#4e4e4e" stroke-width="1.200"/></svg>
<div style="left:690px;top:678px;width:24px;height:12px;border-radius:6px;background:#3a3a3a;"></div>
<div style="left:895px;top:677px;width:14px;height:14px;background:#2a2a2a;"></div>
<!--DOC-->

<!-- ===== DOCK ===== -->
<div class="dk" style="left:910px;top:93px;width:318px;height:598px;"></div>
<!--DOCK_BEGIN-->
<div style="left:910px;top:93px;width:2px;height:598px;background:#262626;"></div>
<div class="dk" style="left:912px;top:93px;width:316px;height:11px;"></div>
<svg style="left:934.5px;top:95px;" width="8" height="6" viewBox="0 0 8 6"><path d="M3 0.500L1 3l2 2.500M6.500 0.500L4.500 3l2 2.500" fill="none" stroke="#8a8a8a" stroke-width="1"/></svg>
<svg style="left:1214.5px;top:95px;" width="8" height="6" viewBox="0 0 8 6"><path d="M1.500 0.500L3.500 3l-2 2.500M5 0.500L7 3 5 5.500" fill="none" stroke="#8a8a8a" stroke-width="1"/></svg>
<div class="pn" style="left:912px;top:104px;width:35px;height:587px;"></div>
<div style="left:912px;top:140.5px;width:35px;height:1.5px;background:#1e1e1e;"></div>
<div style="left:912px;top:229.5px;width:35px;height:1.5px;background:#1e1e1e;"></div>
<div style="left:912px;top:318.8px;width:35px;height:1.5px;background:#1e1e1e;"></div>
<div style="left:912px;top:356.5px;width:35px;height:1.5px;background:#1e1e1e;"></div>
<div style="left:912px;top:393.5px;width:35px;height:1.5px;background:#1e1e1e;"></div>
<div style="left:912px;top:431.5px;width:35px;height:1.5px;background:#1e1e1e;"></div>
<div style="left:912px;top:495px;width:35px;height:1.5px;background:#1e1e1e;"></div>
<div style="left:912px;top:532.5px;width:35px;height:1.5px;background:#1e1e1e;"></div>
<div style="left:920px;top:107px;width:19px;height:3px;background:repeating-linear-gradient(90deg,#191919 0 1px,#2c2c2c 1px 2px);"></div>
<div style="left:920px;top:144px;width:19px;height:3px;background:repeating-linear-gradient(90deg,#191919 0 1px,#2c2c2c 1px 2px);"></div>
<div style="left:920px;top:234px;width:19px;height:3px;background:repeating-linear-gradient(90deg,#191919 0 1px,#2c2c2c 1px 2px);"></div>
<div style="left:920px;top:323px;width:19px;height:3px;background:repeating-linear-gradient(90deg,#191919 0 1px,#2c2c2c 1px 2px);"></div>
<div style="left:920px;top:361px;width:19px;height:3px;background:repeating-linear-gradient(90deg,#191919 0 1px,#2c2c2c 1px 2px);"></div>
<div style="left:920px;top:398px;width:19px;height:3px;background:repeating-linear-gradient(90deg,#191919 0 1px,#2c2c2c 1px 2px);"></div>
<div style="left:920px;top:436px;width:19px;height:3px;background:repeating-linear-gradient(90deg,#191919 0 1px,#2c2c2c 1px 2px);"></div>
<div style="left:920px;top:499px;width:19px;height:3px;background:repeating-linear-gradient(90deg,#191919 0 1px,#2c2c2c 1px 2px);"></div>
<svg style="left:920px;top:115px;" width="20" height="20" viewBox="0 0 20 20"><path d="M13.66 12.32L13.66 13.68L11.73 14.23L11.36 15.12L12.34 16.88L11.38 17.84L9.62 16.86L8.73 17.23L8.18 19.16L6.82 19.16L6.27 17.23L5.38 16.86L3.62 17.84L2.66 16.88L3.64 15.12L3.27 14.23L1.34 13.68L1.34 12.32L3.27 11.77L3.64 10.88L2.66 9.12L3.62 8.16L5.38 9.14L6.27 8.77L6.82 6.84L8.18 6.84L8.73 8.77L9.62 9.14L11.38 8.16L12.34 9.12L11.36 10.88L11.73 11.77Z" fill="#c0c0c0"/><circle cx="7.5" cy="13" r="2.3" fill="#2c2c2c"/><path d="M19.37 5.52L19.37 6.48L17.98 6.86L17.72 7.49L18.43 8.75L17.75 9.43L16.49 8.72L15.86 8.98L15.48 10.37L14.52 10.37L14.14 8.98L13.51 8.72L12.25 9.43L11.57 8.75L12.28 7.49L12.02 6.86L10.63 6.48L10.63 5.52L12.02 5.14L12.28 4.51L11.57 3.25L12.25 2.57L13.51 3.28L14.14 3.02L14.52 1.63L15.48 1.63L15.86 3.02L16.49 3.28L17.75 2.57L18.43 3.25L17.72 4.51L17.98 5.14Z" fill="#c0c0c0"/><circle cx="15" cy="6" r="1.6" fill="#2c2c2c"/></svg>
<svg style="left:922px;top:156px;" width="16" height="13" viewBox="0 0 16 13"><rect y="0.500" width="16" height="1" fill="#c0c0c0"/><rect y="4.500" width="16" height="1.800" fill="#c0c0c0"/><rect y="9.300" width="16" height="2.800" fill="#c0c0c0"/></svg>
<svg style="left:921.5px;top:182.5px;" width="17" height="12" viewBox="0 0 17 12"><defs><linearGradient id="dg1"><stop offset="0" stop-color="#b8b8b8"/><stop offset="1" stop-color="#2e2e2e"/></linearGradient></defs><rect x="0.600" y="0.600" width="15.800" height="10.800" fill="url(#dg1)" stroke="#c0c0c0" stroke-width="1.200"/></svg>
<svg style="left:920px;top:206px;" width="19" height="18" viewBox="0 0 19 18"><circle cx="7" cy="7" r="6" fill="#c0c0c0"/><circle cx="11.500" cy="11" r="5.300" fill="#6c6c6c" stroke="#c0c0c0" stroke-width="1.300"/></svg>
<span class="t" style="left:922.5px;top:245.5px;font-size:16.5px;color:#c0c0c0;font-weight:bold;transform:scaleX(.95);transform-origin:0 0;">A</span>
<div style="left:936.500px;top:244px;width:1px;height:17px;background:#c0c0c0;"></div>
<svg style="left:923.5px;top:271.5px;" width="12" height="14" viewBox="0 0 12 14"><path d="M5 0h6.500v14H10V1.500H8.300V14H6.800V7.500H5A3.750 3.750 0 0 1 5 0z" fill="#c0c0c0"/></svg>
<span class="t" style="left:922.5px;top:294px;font-size:20px;color:#c0c0c0;font-family:'Liberation Serif',serif;font-style:italic;font-weight:bold;">O</span>
<svg style="left:921px;top:333px;" width="17" height="17" viewBox="0 0 17 17"><rect x="1.500" y="2.500" width="14" height="13.500" fill="#c0c0c0"/><circle cx="9" cy="6.800" r="3.600" fill="#2c2c2c"/><circle cx="3.800" cy="3.800" r="3.600" fill="#c0c0c0" stroke="#2c2c2c" stroke-width="1"/></svg>
<svg style="left:924px;top:373px;" width="12" height="13" viewBox="0 0 12 13"><path d="M0 0.300V12.700L12 6.500Z" fill="#c0c0c0"/></svg>
<svg style="left:921.5px;top:408px;" width="18" height="17" viewBox="0 0 18 17"><path d="M8 4.500H1.200V16H14V9.500" fill="none" stroke="#c0c0c0" stroke-width="1.700"/><path d="M8 9.500L16 1.500M10.500 1.200H16.300V7" fill="none" stroke="#c0c0c0" stroke-width="1.700"/></svg>
<svg style="left:922.5px;top:446px;" width="15" height="18" viewBox="0 0 15 18"><rect x="0.300" y="0" width="1.100" height="17.500" fill="#c0c0c0"/><rect x="2.600" y="2.500" width="7" height="5" fill="#c0c0c0"/><rect x="2.600" y="9.800" width="12" height="5" fill="#c0c0c0"/></svg>
<svg style="left:922.5px;top:473px;" width="15" height="15" viewBox="0 0 15 15"><rect x="0.500" y="0.500" width="8.500" height="8.500" fill="#c0c0c0"/><rect x="5.500" y="5.500" width="9" height="9" fill="#c0c0c0"/><rect x="5.500" y="5.500" width="3.500" height="3.500" fill="#8a8a8a" stroke="#2c2c2c" stroke-width=".8"/></svg>
<svg style="left:921px;top:508px;" width="18" height="20" viewBox="0 0 18 20"><circle cx="8.300" cy="10" r="7.400" fill="#c0c0c0"/><path d="M8.500 2.200A7.800 7.800 0 0 1 8.500 17.800" fill="none" stroke="#2c2c2c" stroke-width="1.100"/><path d="M10 1.200A8.900 8.900 0 0 1 10 18.800" fill="none" stroke="#c0c0c0" stroke-width="1.200"/><path d="M7.500 1.300L10.500 -0.200V2.800ZM12.500 18.700L9.500 17.200V20.200Z" fill="#c0c0c0"/></svg>
<div class="dk" style="left:947px;top:104px;width:2px;height:587px;"></div>
<div class="pn" style="left:949px;top:104px;width:279px;height:587px;"></div>
<div style="left:949px;top:104px;width:279px;height:15px;background:#202020;"></div>
<div style="left:949px;top:104px;width:33px;height:15px;background:#262626;border-right:1px solid #202020;"></div>
<span style="left:955.5px;top:107.1px;font-size:10px;color:#b4b4b4;">変形</span>
<div style="left:982px;top:104px;width:38px;height:15px;background:#2c2c2c;"></div>
<span style="left:994.5px;top:107.1px;font-size:10px;font-weight:bold;color:#f0f0f0;">情報</span>
<div style="left:1020px;top:104px;width:55.5px;height:15px;background:#262626;border-right:1px solid #202020;"></div>
<span style="left:1026.5px;top:107.1px;font-size:10px;color:#b4b4b4;font-size:11px;">Libraries</span>
<div style="left:1075.5px;top:104px;width:43.5px;height:15px;background:#262626;border-right:1px solid #202020;"></div>
<span style="left:1082px;top:107.1px;font-size:10px;color:#b4b4b4;">リンク</span>
<svg style="left:1213px;top:108px;" width="9" height="7" viewBox="0 0 9 7"><g fill="#8e8e8e"><rect y="0" width="9" height="1"/><rect y="2" width="9" height="1"/><rect y="4" width="9" height="1"/><rect y="6" width="9" height="1"/></g></svg>
<svg style="left:985px;top:107.5px;" width="6" height="9" viewBox="0 0 6 9"><path d="M1 3.300L3 1.200l2 2.100M1 5.700L3 7.800l2-2.100" fill="none" stroke="#b0b0b0" stroke-width="1"/></svg>
<svg style="left:954px;top:134.5px;" width="13" height="13" viewBox="0 0 13 13"><path d="M0 6.500H13M6.500 0V13" stroke="#e0e0e0" stroke-width="1.100" fill="none"/></svg>
<span class="t" style="left:971px;top:127.5px;font-size:11px;color:#bdbdbd;letter-spacing:.9px;">X :</span>
<span class="t" style="left:991.5px;top:127.5px;font-size:11px;color:#bdbdbd;letter-spacing:.9px;">571 px</span>
<span class="t" style="left:971px;top:146px;font-size:11px;color:#bdbdbd;letter-spacing:.9px;">Y :</span>
<span class="t" style="left:992px;top:146px;font-size:11px;color:#bdbdbd;letter-spacing:.9px;">183.667 px</span>
<span class="t" style="left:1112.5px;top:127.5px;font-size:11px;color:#bdbdbd;letter-spacing:.9px;">W :</span>
<span class="t" style="left:1135px;top:127.5px;font-size:11px;color:#bdbdbd;letter-spacing:.9px;">0 px</span>
<span class="t" style="left:1112.5px;top:146px;font-size:11px;color:#bdbdbd;letter-spacing:.9px;">H :</span>
<span class="t" style="left:1134px;top:146px;font-size:11px;color:#bdbdbd;letter-spacing:.9px;">0 px</span>
<svg style="left:1096px;top:135px;" width="13" height="13" viewBox="0 0 13 13"><path d="M1.500 10V2.500H10" fill="none" stroke="#d0d0d0" stroke-width="1.100"/><path d="M12.500 2.500L9.500 0.500V4.500ZM1.500 12.500L-0.500 9.500H3.500Z" fill="#d0d0d0"/><path d="M4.500 11.500H11.500V5" fill="none" stroke="#8a8a8a" stroke-width="1" stroke-dasharray="1.500 1.200"/></svg>
<div style="left:954px;top:163px;width:269px;height:1px;background:#3a3a3a;"></div>
<div style="left:1092px;top:124px;width:1px;height:34px;background:#383838;"></div>
<div style="left:1092px;top:168px;width:1px;height:14px;background:#383838;"></div>
<div class="dk" style="left:949px;top:188.500px;width:279px;height:2.500px;"></div>
<div style="left:949px;top:191px;width:279px;height:16px;background:#202020;"></div>
<div style="left:949px;top:191px;width:62.5px;height:16px;background:#2c2c2c;"></div>
<span style="left:955.5px;top:194.1px;font-size:10px;font-weight:bold;color:#f0f0f0;">スウォッチ</span>
<div style="left:1011.5px;top:191px;width:40.5px;height:16px;background:#262626;border-right:1px solid #202020;"></div>
<span style="left:1018px;top:194.1px;font-size:10px;color:#b4b4b4;">カラー</span>
<div style="left:1052px;top:191px;width:71.5px;height:16px;background:#262626;border-right:1px solid #202020;"></div>
<span style="left:1058.5px;top:194.1px;font-size:10px;color:#b4b4b4;">カラーガイド</span>
<div style="left:1123.5px;top:191px;width:68px;height:16px;background:#262626;border-right:1px solid #202020;"></div>
<span style="left:1129.5px;top:194.1px;font-size:10px;color:#b4b4b4;letter-spacing:.35px;">Color テーマ</span>
<svg style="left:1213px;top:196px;" width="9" height="7" viewBox="0 0 9 7"><g fill="#8e8e8e"><rect y="0" width="9" height="1"/><rect y="2" width="9" height="1"/><rect y="4" width="9" height="1"/><rect y="6" width="9" height="1"/></g></svg>
<div style="left:954px;top:213px;width:17px;height:17px;background:#ff0000;border:1px solid #e6e6e6;"></div>
<svg style="left:963px;top:221.5px;" width="18" height="18" viewBox="0 0 18 18"><rect width="18" height="18" fill="#e6e6e6"/><rect x="1" y="1" width="16" height="16" fill="#fff"/><rect x="5.500" y="5.500" width="7" height="7" fill="#2c2c2c"/><path d="M0.500 17.500L17.500 0.500" stroke="#ff0000" stroke-width="1.600"/></svg>
<div style="left:1179px;top:213px;width:43px;height:21px;border:1px solid #383838;border-radius:3px;"></div>
<div style="left:1179px;top:213px;width:21px;height:21px;background:#1b1b1b;border-radius:3px 0 0 3px;"></div>
<svg style="left:1183px;top:217px;" width="12" height="13" viewBox="0 0 12 13"><g fill="#e0e0e0"><rect y="0.500" width="12" height="1.600"/><rect y="4" width="12" height="1.600"/><rect y="7.500" width="12" height="1.600"/><rect y="11" width="12" height="1.600"/></g></svg>
<svg style="left:1205px;top:217px;" width="14" height="13" viewBox="0 0 14 13"><g fill="#c0c0c0"><rect x="0" y="0" width="4" height="3.700"/><rect x="5" y="0" width="4" height="3.700"/><rect x="10" y="0" width="4" height="3.700"/><rect x="0" y="4.700" width="4" height="3.700"/><rect x="5" y="4.700" width="4" height="3.700"/><rect x="10" y="4.700" width="4" height="3.700"/><rect x="0" y="9.400" width="4" height="3.600"/><rect x="5" y="9.400" width="4" height="3.600"/><rect x="10" y="9.400" width="4" height="3.600"/></g></svg>
<div style="left:954px;top:245px;width:268.500px;height:86.500px;border:1px solid #383838;border-top:0;border-radius:0 0 3px 3px;overflow:hidden;" id="swl"></div>
<div style="left:954px;top:245px;width:268px;height:86px;overflow:hidden;">
<div style="left:0;top:0;width:257.500px;height:18.400px;background:#30496a;"></div>
<svg style="left:22px;top:2.1px;" width="13.5" height="13.5" viewBox="0 0 13.5 13.5"><rect width="13.500" height="13.500" fill="#fff"/><path d="M0 13.500L13.500 0" stroke="#ff0000" stroke-width="1.800"/><rect x="0.250" y="0.250" width="13" height="13" fill="none" stroke="#222" stroke-width=".5"/></svg>
<span style="left:41.500px;top:5.3px;font-size:11px;color:#e6e6e6;">[なし]</span>
<svg style="left:242.5px;top:4.9px;" width="11" height="10" viewBox="0 0 11 10"><rect x="1.500" y="1.500" width="8" height="7" fill="none" stroke="#e0e0e0" stroke-width="1.300"/><path d="M0.500 0.500L10.500 9.500" stroke="#e0e0e0" stroke-width="1.300"/></svg>
<div style="left:0;top:18.4px;width:257.500px;height:1px;background:#232323;"></div>
<div style="left:22px;top:21.3px;width:13.500px;height:12.700px;background:#000;"></div>
<span style="left:41.500px;top:23.3px;font-size:11px;color:#e6e6e6;">[レジストレーション]</span>
<svg style="left:242.5px;top:22.9px;" width="10.5" height="10.5" viewBox="0 0 10.5 10.5"><rect x="0.500" y="0.500" width="9.500" height="9.500" fill="#3a3a3a" stroke="#d0d0d0" stroke-width="1"/><circle cx="5.250" cy="5.250" r="2.300" fill="none" stroke="#d0d0d0" stroke-width=".9"/><path d="M5.250 1V9.500M1 5.250H9.500" stroke="#d0d0d0" stroke-width=".9"/></svg>
<div style="left:0;top:36.7px;width:257.500px;height:1px;background:#232323;"></div>
<div style="left:22px;top:39.6px;width:13.500px;height:12.700px;background:#fff;outline:1px solid #222;"></div>
<span style="left:41.500px;top:41.6px;font-size:11px;color:#e6e6e6;">ホワイト</span>
<svg style="left:242.5px;top:41.2px;" width="10.5" height="10.5" viewBox="0 0 10.5 10.5"><rect width="10.500" height="10.500" fill="#e8e8e8"/><rect x="1" y="1" width="3" height="8.500" fill="#f03030"/><rect x="4" y="1" width="2.800" height="8.500" fill="#30a040"/><rect x="6.800" y="1" width="2.700" height="8.500" fill="#2a68e8"/></svg>
<div style="left:0;top:55.4px;width:257.500px;height:1px;background:#232323;"></div>
<div style="left:22px;top:58.3px;width:13.500px;height:12.700px;background:#000;"></div>
<span style="left:41.500px;top:60.3px;font-size:11px;color:#e6e6e6;">ブラック</span>
<svg style="left:242.5px;top:59.9px;" width="10.5" height="10.5" viewBox="0 0 10.5 10.5"><rect width="10.500" height="10.500" fill="#e8e8e8"/><rect x="1" y="1" width="3" height="8.500" fill="#f03030"/><rect x="4" y="1" width="2.800" height="8.500" fill="#30a040"/><rect x="6.800" y="1" width="2.700" height="8.500" fill="#2a68e8"/></svg>
<div style="left:0;top:73.8px;width:257.500px;height:1px;background:#232323;"></div>
<div style="left:22px;top:76.7px;width:13.500px;height:12.700px;background:#ff0000;"></div>
<span style="left:41.500px;top:78.7px;font-size:11px;color:#e6e6e6;">RGB レッド</span>
<svg style="left:242.5px;top:78.3px;" width="10.5" height="10.5" viewBox="0 0 10.5 10.5"><rect width="10.500" height="10.500" fill="#e8e8e8"/><rect x="1" y="1" width="3" height="8.500" fill="#f03030"/><rect x="4" y="1" width="2.800" height="8.500" fill="#30a040"/><rect x="6.800" y="1" width="2.700" height="8.500" fill="#2a68e8"/></svg>
<div style="left:257.500px;top:0;width:11px;height:87px;background:#242424;"></div>
<div style="left:258.500px;top:12px;width:8.500px;height:22px;border-radius:4.500px;background:#3a3a3a;"></div>
<svg style="left:259px;top:4px;" width="8" height="5" viewBox="0 0 8 5"><path d="M0.700 4.300L4 1l3.300 3.300" fill="none" stroke="#4e4e4e" stroke-width="1.200"/></svg>
<svg style="left:259px;top:78.5px;" width="8" height="5" viewBox="0 0 8 5"><path d="M0.700 0.700L4 4l3.300-3.300" fill="none" stroke="#4e4e4e" stroke-width="1.200"/></svg>
</div>
<svg style="left:958.5px;top:334.7px;" width="16" height="12" viewBox="0 0 16 12"><g fill="#c0c0c0"><rect x="0" y="1" width="1.700" height="9.500"/><rect x="2.800" y="1" width="1.700" height="9.500"/><path d="M5.500 1.800L7 1.300L10 10L8.500 10.500Z"/><path d="M10.800 9.500h3.400l-1.700 2z"/></g></svg>
<svg style="left:984px;top:334.7px;" width="11" height="12" viewBox="0 0 11 12"><circle cx="4" cy="6" r="2.800" fill="none" stroke="#c0c0c0" stroke-width="1.300"/><circle cx="4" cy="6" r="1" fill="#c0c0c0"/><path d="M5.500 4.500L8.500 1.500M5.500 7.500L8.500 10.500" stroke="#c0c0c0" stroke-width="1.200"/><circle cx="9" cy="1.500" r="1.200" fill="#c0c0c0"/><circle cx="9" cy="10.500" r="1.200" fill="#c0c0c0"/></svg>
<svg style="left:1005px;top:333.7px;" width="18" height="13" viewBox="0 0 18 13"><path d="M7.500 11.500H15A3 3 0 0 0 15 5.500A4.200 4.200 0 0 0 7 4.500A3.500 3.500 0 0 0 5.500 8" fill="#c0c0c0"/><path d="M7 11.500H15" stroke="#c0c0c0" stroke-width="1.500"/><path d="M0 9.500H5M3.300 7.300L5.700 9.500L3.300 11.700" fill="none" stroke="#c0c0c0" stroke-width="1.200"/></svg>
<svg style="left:1094.5px;top:335.2px;" width="15" height="11" viewBox="0 0 15 11"><rect width="10" height="10" fill="#d4d4d4"/><g fill="#333"><rect x="1.500" y="1.500" width="2" height="2"/><rect x="6.500" y="1.500" width="2" height="2"/><rect x="4" y="4" width="2" height="2"/><rect x="1.500" y="6.500" width="2" height="2"/><rect x="6.500" y="6.500" width="2" height="2"/></g><path d="M11 8.500h3.600l-1.800 2z" fill="#c0c0c0"/></svg>
<svg style="left:1120px;top:335.2px;" width="10.5" height="10.5" viewBox="0 0 10.5 10.5"><rect x="0.500" y="0.500" width="9.500" height="9.500" fill="none" stroke="#4c4c4c" stroke-width="1"/><path d="M2.500 3h1M4.500 3h3.500M2.500 5.200h1M4.500 5.200h3.500M2.500 7.400h1M4.500 7.400h3.500" stroke="#4c4c4c" stroke-width="1"/></svg>
<svg style="left:1142.5px;top:334.7px;" width="13" height="11" viewBox="0 0 13 11"><path d="M0 0.500H4.500L5.500 2H13V11H0Z" fill="#c0c0c0"/></svg>
<svg style="left:1168.5px;top:335.2px;" width="10" height="10" viewBox="0 0 10 10"><path d="M0.500 0.500H9.500V9.500H4L0.500 6Z" fill="#4c4c4c"/><path d="M0.500 6H4V9.500" fill="#2c2c2c" stroke="#4c4c4c" stroke-width=".8"/></svg>
<svg style="left:1192px;top:334.2px;" width="10" height="12" viewBox="0 0 10 12"><path d="M0 2.500H10M3.500 2.500V1H6.500V2.500" fill="none" stroke="#4c4c4c" stroke-width="1"/><path d="M1.200 3.500H8.800L8.300 11.500H1.700Z" fill="none" stroke="#4c4c4c" stroke-width="1"/><path d="M3.500 4.500V10.500M5 4.500V10.500M6.500 4.500V10.500" stroke="#4c4c4c" stroke-width=".8"/></svg>
<div class="dk" style="left:949px;top:349.500px;width:279px;height:3px;"></div>
<div style="left:949px;top:352.500px;width:279px;height:15.500px;background:#202020;"></div>
<div style="left:949px;top:352.500px;width:73px;height:15.500px;background:#2c2c2c;"></div>
<span class="t" style="left:955.8px;top:355.8px;font-size:10px;color:#e8e8e8;">アピアランス</span>
<svg style="left:1213px;top:357px;" width="9" height="7" viewBox="0 0 9 7"><g fill="#8e8e8e"><rect y="0" width="9" height="1"/><rect y="2" width="9" height="1"/><rect y="4" width="9" height="1"/><rect y="6" width="9" height="1"/></g></svg>
<div style="left:954px;top:373.500px;width:268.500px;height:118px;border:1px solid #383838;border-radius:3px;"></div>
<div style="left:957px;top:377px;width:17.500px;height:17px;background:#ff0000;border:1px solid #f0f0f0;"></div>
<span class="b" style="left:1000.5px;top:381px;font-size:11px;">選択なし</span>
<div style="left:955px;top:396px;width:256px;height:1px;background:#383838;"></div>
<div style="left:955px;top:419.4px;width:256px;height:1px;background:#383838;"></div>
<div style="left:955px;top:442.6px;width:256px;height:1px;background:#383838;"></div>
<div style="left:955px;top:465.7px;width:256px;height:1px;background:#383838;"></div>
<div style="left:955px;top:488px;width:256px;height:1px;background:#383838;"></div>
<div style="left:977px;top:397px;width:1px;height:94px;background:#343434;"></div>
<svg style="left:958.5px;top:403.5px;" width="13" height="9" viewBox="0 0 13 9"><path d="M0.300 4.500C3 -0.500 10 -0.500 12.700 4.500C10 9.500 3 9.500 0.300 4.500Z" fill="#e0e0e0"/><circle cx="6.500" cy="4.500" r="2.600" fill="#2c2c2c"/><circle cx="6.500" cy="4.500" r="1.500" fill="#e0e0e0"/><circle cx="5.700" cy="3.700" r=".7" fill="#2c2c2c"/></svg>
<svg style="left:983.5px;top:405.5px;" width="8" height="5" viewBox="0 0 8 5"><path d="M0.700 0.700L4 4l3.300-3.300" fill="none" stroke="#9a9a9a" stroke-width="1.100"/></svg>
<span class="t" style="left:1000.5px;top:403.5px;font-size:11px;border-bottom:1px dotted #9a9a9a;padding-bottom:.5px;color:#e0e0e0;">線 :</span>
<svg style="left:1063px;top:401px;" width="15" height="15" viewBox="0 0 15 15"><rect width="15" height="15" fill="#e8e8e8"/><rect x="1" y="1" width="13" height="13" fill="#333"/><rect x="2" y="2" width="11" height="11" fill="#fff"/><path d="M3.500 11.500L11.500 3.500" stroke="#e00020" stroke-width="1.800"/></svg>
<svg style="left:958.5px;top:427px;" width="13" height="9" viewBox="0 0 13 9"><path d="M0.300 4.500C3 -0.500 10 -0.500 12.700 4.500C10 9.500 3 9.500 0.300 4.500Z" fill="#444"/><circle cx="6.500" cy="4.500" r="2.600" fill="#2c2c2c"/><circle cx="6.500" cy="4.500" r="1.500" fill="#444"/><circle cx="5.700" cy="3.700" r=".7" fill="#2c2c2c"/></svg>
<span class="t" style="left:1021.5px;top:426.5px;font-size:11px;border-bottom:1px dotted #9a9a9a;padding-bottom:.5px;color:#e0e0e0;">不透明度 :</span>
<span class="t" style="left:1098px;top:426.5px;font-size:11px;color:#e0e0e0;">初期設定</span>
<svg style="left:958.5px;top:450px;" width="13" height="9" viewBox="0 0 13 9"><path d="M0.300 4.500C3 -0.500 10 -0.500 12.700 4.500C10 9.500 3 9.500 0.300 4.500Z" fill="#e0e0e0"/><circle cx="6.500" cy="4.500" r="2.600" fill="#2c2c2c"/><circle cx="6.500" cy="4.500" r="1.500" fill="#e0e0e0"/><circle cx="5.700" cy="3.700" r=".7" fill="#2c2c2c"/></svg>
<svg style="left:983.5px;top:452px;" width="8" height="5" viewBox="0 0 8 5"><path d="M0.700 0.700L4 4l3.300-3.300" fill="none" stroke="#9a9a9a" stroke-width="1.100"/></svg>
<span class="t" style="left:1000.5px;top:450px;font-size:11px;color:#e0e0e0;">塗り :</span>
<svg style="left:1063px;top:447px;" width="15" height="15" viewBox="0 0 15 15"><rect width="15" height="15" fill="#e8e8e8"/><rect x="1" y="1" width="13" height="13" fill="#333"/><rect x="2.500" y="2.500" width="10" height="10" fill="#ff0000"/></svg>
<svg style="left:958.5px;top:473px;" width="13" height="9" viewBox="0 0 13 9"><path d="M0.300 4.500C3 -0.500 10 -0.500 12.700 4.500C10 9.500 3 9.500 0.300 4.500Z" fill="#444"/><circle cx="6.500" cy="4.500" r="2.600" fill="#2c2c2c"/><circle cx="6.500" cy="4.500" r="1.500" fill="#444"/><circle cx="5.700" cy="3.700" r=".7" fill="#2c2c2c"/></svg>
<span class="t" style="left:1021.5px;top:472.5px;font-size:11px;border-bottom:1px dotted #9a9a9a;padding-bottom:.5px;color:#e0e0e0;">不透明度 :</span>
<span class="t" style="left:1098px;top:472.5px;font-size:11px;color:#e0e0e0;">初期設定</span>
<div style="left:1211.500px;top:374.500px;width:10.500px;height:116px;background:#242424;border-radius:0 3px 3px 0;"></div>
<div style="left:1212.500px;top:385px;width:8.500px;height:83px;border-radius:4.500px;background:#363636;"></div>
<svg style="left:1213px;top:377.5px;" width="8" height="5" viewBox="0 0 8 5"><path d="M0.700 4.300L4 1l3.300 3.300" fill="none" stroke="#4e4e4e" stroke-width="1.200"/></svg>
<svg style="left:1213px;top:484px;" width="8" height="5" viewBox="0 0 8 5"><path d="M0.700 0.700L4 4l3.300-3.300" fill="none" stroke="#4e4e4e" stroke-width="1.200"/></svg>
<svg style="left:960px;top:496.5px;" width="10.5" height="10.5" viewBox="0 0 10.5 10.5"><rect x="0.900" y="0.900" width="8.700" height="8.700" fill="none" stroke="#e0e0e0" stroke-width="1.800"/></svg>
<svg style="left:984px;top:496.5px;" width="10.5" height="10.5" viewBox="0 0 10.5 10.5"><rect x="0.500" y="0.500" width="9.500" height="9.500" fill="none" stroke="#c0c0c0" stroke-width="1"/><rect x="2.200" y="2.200" width="6.100" height="6.100" fill="#c0c0c0"/></svg>
<span class="t" style="left:1007.5px;top:495.5px;font-size:13px;font-style:italic;color:#c0c0c0;letter-spacing:-.5px;">fx</span>
<svg style="left:1018.5px;top:505px;" width="3" height="2" viewBox="0 0 3 2"><path d="M0 0h3l-1.500 2z" fill="#c0c0c0"/></svg>
<svg style="left:1144px;top:496.5px;" width="10.5" height="10.5" viewBox="0 0 10.5 10.5"><circle cx="5.250" cy="5.250" r="4.200" fill="none" stroke="#e0e0e0" stroke-width="1.500"/><path d="M2.300 2.300L8.200 8.200" stroke="#e0e0e0" stroke-width="1.500"/></svg>
<svg style="left:1168.5px;top:496.5px;" width="10" height="10" viewBox="0 0 10 10"><path d="M0.500 0.500H9.500V9.500H4L0.500 6Z" fill="#4c4c4c"/><path d="M0.500 6H4V9.500" fill="#2c2c2c" stroke="#4c4c4c" stroke-width=".8"/></svg>
<svg style="left:1192px;top:495.5px;" width="10" height="12" viewBox="0 0 10 12"><path d="M0 2.500H10M3.500 2.500V1H6.500V2.500" fill="none" stroke="#4c4c4c" stroke-width="1"/><path d="M1.200 3.500H8.800L8.300 11.500H1.700Z" fill="none" stroke="#4c4c4c" stroke-width="1"/><path d="M3.500 4.500V10.500M5 4.500V10.500M6.500 4.500V10.500" stroke="#4c4c4c" stroke-width=".8"/></svg>
<div class="dk" style="left:949px;top:510.500px;width:279px;height:3px;"></div>
<div style="left:949px;top:513.500px;width:279px;height:15px;background:#202020;"></div>
<div style="left:949px;top:513.500px;width:86.500px;height:15px;background:#2c2c2c;"></div>
<span class="t" style="left:955.5px;top:516.3px;font-size:10px;color:#e8e8e8;">CSS プロパティ</span>
<svg style="left:1213px;top:518px;" width="9" height="7" viewBox="0 0 9 7"><g fill="#8e8e8e"><rect y="0" width="9" height="1"/><rect y="2" width="9" height="1"/><rect y="4" width="9" height="1"/><rect y="6" width="9" height="1"/></g></svg>
<div class="dk" style="left:949px;top:528.500px;width:279px;height:3.500px;"></div>
<div style="left:949px;top:532px;width:279px;height:16px;background:#202020;"></div>
<div style="left:949px;top:532px;width:52px;height:16px;background:#2c2c2c;"></div>
<div style="left:1001px;top:532px;width:72.500px;height:16px;background:#262626;"></div>
<span class="t" style="left:956.8px;top:536px;font-size:9.7px;color:#e8e8e8;">レイヤー</span>
<span class="t" style="left:1008.3px;top:536px;font-size:9.9px;color:#a8a8a8;">アートボード</span>
<svg style="left:1213px;top:537.5px;" width="9" height="7" viewBox="0 0 9 7"><g fill="#8e8e8e"><rect y="0" width="9" height="1"/><rect y="2" width="9" height="1"/><rect y="4" width="9" height="1"/><rect y="6" width="9" height="1"/></g></svg>
<div style="left:954px;top:554px;width:268.500px;height:119px;border:1px solid #383838;border-top:0;border-radius:0 0 3px 3px;"></div>
<div style="left:954.500px;top:554.500px;width:267.500px;height:18.200px;background:#30496a;"></div>
<svg style="left:958px;top:560px;" width="11" height="7.6" viewBox="0 0 13 9"><path d="M0.300 4.500C3 -0.500 10 -0.500 12.700 4.500C10 9.500 3 9.500 0.300 4.500Z" fill="#e6e6e6"/><circle cx="6.500" cy="4.500" r="2.600" fill="#30496a"/><circle cx="6.500" cy="4.500" r="1.500" fill="#e6e6e6"/></svg>
<div style="left:973.5px;top:554.500px;width:1px;height:18.200px;background:#28405c;"></div>
<div style="left:992px;top:554.500px;width:1px;height:18.200px;background:#28405c;"></div>
<div style="left:998.5px;top:554.500px;width:1px;height:18.200px;background:#28405c;"></div>
<div style="left:1189.5px;top:554.500px;width:1px;height:18.200px;background:#28405c;"></div>
<div style="left:994px;top:555px;width:3px;height:17.500px;background:#4a7cff;"></div>
<svg style="left:1004.5px;top:559.5px;" width="5" height="8" viewBox="0 0 5 8"><path d="M0.800 0.700L4 4 .8 7.300" fill="none" stroke="#c8c8c8" stroke-width="1.100"/></svg>
<div style="left:1021px;top:555.500px;width:16.500px;height:16.500px;background:#fff;border:1px solid #1a1a1a;"></div>
<svg style="left:1022.500px;top:557px;" width="13.500" height="13.500" viewBox="405 270 206 206"><rect x="413" y="277" width="190" height="190" rx="12" fill="none" stroke="#ff0000" stroke-width="14"/><g font-family="'Liberation Serif','Noto Serif CJK SC',serif" font-size="90" font-weight="900" fill="#ff0000"><text x="420" y="362">し</text><text x="508" y="362">ろ</text><text x="420" y="452">ク</text><text x="508" y="452">ロ</text></g></svg>
<span class="t" style="left:1043.5px;top:558.5px;font-size:11px;color:#e8e8e8;">レイヤー 1</span>
<svg style="left:1195px;top:559.5px;" width="8.5" height="8.5" viewBox="0 0 8.5 8.5"><circle cx="4.250" cy="4.250" r="3.400" fill="none" stroke="#d8d8d8" stroke-width="1.100"/></svg>
<svg style="left:1217px;top:554.5px;" width="5" height="5" viewBox="0 0 5 5"><path d="M0 0H5V5Z" fill="#d0d0d0"/></svg>
<span class="t" style="left:954.5px;top:676.5px;font-size:11px;color:#c4c4c4;">1 レイヤー</span>
<svg style="left:1096px;top:676px;" width="11" height="11" viewBox="0 0 11 11"><circle cx="6.500" cy="4.300" r="3.500" fill="none" stroke="#4c4c4c" stroke-width="1.200"/><path d="M4 7L0.700 10.500" stroke="#4c4c4c" stroke-width="1.500"/></svg>
<svg style="left:1119.5px;top:676px;" width="11" height="11" viewBox="0 0 11 11"><rect x="0.600" y="0.600" width="7.300" height="7.300" fill="none" stroke="#e0e0e0" stroke-width="1.200"/><rect x="2.700" y="2.700" width="4" height="4" fill="#e0e0e0"/><path d="M10.400 3V10.400H3" fill="none" stroke="#c0c0c0" stroke-width="1"/></svg>
<svg style="left:1141.5px;top:676px;" width="14" height="11" viewBox="0 0 14 11"><path d="M5.500 1H13.500V10.500H8.500L5.500 7.500Z" fill="#e0e0e0"/><path d="M5.500 7.500H8.500V10.500" fill="#2c2c2c" stroke="#e0e0e0" stroke-width=".8"/><path d="M1 0.500V4H5M3.300 2.200L5.200 4L3.300 5.800" fill="none" stroke="#e0e0e0" stroke-width="1.100"/></svg>
<svg style="left:1168.5px;top:676.5px;" width="10" height="10" viewBox="0 0 10 10"><path d="M0.500 0.500H9.500V9.500H4L0.500 6Z" fill="#e0e0e0"/><path d="M0.500 6H4V9.500" fill="#2c2c2c" stroke="#e0e0e0" stroke-width=".8"/></svg>
<svg style="left:1192px;top:675.5px;" width="10" height="12" viewBox="0 0 10 12"><path d="M0 2.500H10M3.500 2.500V1H6.500V2.500" fill="none" stroke="#4c4c4c" stroke-width="1"/><path d="M1.200 3.500H8.800L8.300 11.500H1.700Z" fill="none" stroke="#4c4c4c" stroke-width="1"/><path d="M3.500 4.500V10.500M5 4.500V10.500M6.500 4.500V10.500" stroke="#4c4c4c" stroke-width=".8"/></svg>
<!--DOCK_END-->
<!--DOCK-->

</div></div>
</body>
</html>
